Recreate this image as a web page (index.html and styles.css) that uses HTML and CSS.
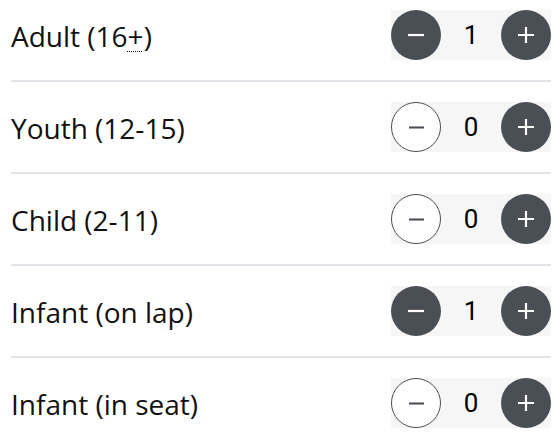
FILE: index.html
```html
<!DOCTYPE html>
<html>
<head>
<meta charset="utf-8">
<link rel="stylesheet" href="styles.css">
</head>
<body>
<ul class="pax-list">
  <li class="pax-row first">
    <span class="pax-label">Adult (16<abbr title="and over">+</abbr>)</span>
    <div class="counter">
      <button class="btn filled" aria-label="Decrease"><svg viewBox="0 0 50 50"><path d="M17 25h16"/></svg></button>
      <span class="count">1</span>
      <button class="btn filled" aria-label="Increase"><svg viewBox="0 0 50 50"><path d="M17 25h16M25 17v16"/></svg></button>
    </div>
  </li>
  <li class="pax-row">
    <span class="pax-label">Youth (12-15)</span>
    <div class="counter">
      <button class="btn outline" aria-label="Decrease"><svg viewBox="0 0 50 50"><path d="M17 25h16"/></svg></button>
      <span class="count">0</span>
      <button class="btn filled" aria-label="Increase"><svg viewBox="0 0 50 50"><path d="M17 25h16M25 17v16"/></svg></button>
    </div>
  </li>
  <li class="pax-row">
    <span class="pax-label">Child (2-11)</span>
    <div class="counter">
      <button class="btn outline" aria-label="Decrease"><svg viewBox="0 0 50 50"><path d="M17 25h16"/></svg></button>
      <span class="count">0</span>
      <button class="btn filled" aria-label="Increase"><svg viewBox="0 0 50 50"><path d="M17 25h16M25 17v16"/></svg></button>
    </div>
  </li>
  <li class="pax-row">
    <span class="pax-label">Infant (on lap)</span>
    <div class="counter">
      <button class="btn filled" aria-label="Decrease"><svg viewBox="0 0 50 50"><path d="M17 25h16"/></svg></button>
      <span class="count">1</span>
      <button class="btn filled" aria-label="Increase"><svg viewBox="0 0 50 50"><path d="M17 25h16M25 17v16"/></svg></button>
    </div>
  </li>
  <li class="pax-row last">
    <span class="pax-label">Infant (in seat)</span>
    <div class="counter">
      <button class="btn outline" aria-label="Decrease"><svg viewBox="0 0 50 50"><path d="M17 25h16"/></svg></button>
      <span class="count">0</span>
      <button class="btn filled" aria-label="Increase"><svg viewBox="0 0 50 50"><path d="M17 25h16M25 17v16"/></svg></button>
    </div>
  </li>
</ul>
</body>
</html>
```
FILE: styles.css
```css
html, body {
  margin: 0;
  padding: 0;
  background: #ffffff;
}
.pax-list {
  list-style: none;
  margin: 0 9px 0 11px;
  padding: 0;
  font-family: "Open Sans", "Liberation Sans", sans-serif;
}
.pax-row {
  display: flex;
  align-items: center;
  justify-content: space-between;
  padding: 20px 0;
  border-bottom: 2px solid #e1e5e9;
}
.pax-row.first {
  padding-top: 10px;
}
.pax-row.last {
  border-bottom: none;
}
.pax-label {
  font-size: 28px;
  color: #111111;
  line-height: 36px;
  position: relative;
  top: 1px;
}
.pax-label abbr {
  text-decoration: underline dotted;
  text-underline-offset: 4px;
  text-decoration-thickness: 1px;
}
.counter {
  display: flex;
  align-items: center;
  background: #f6f6f6;
  height: 50px;
}
.count {
  width: 60px;
  text-align: center;
  font-family: Roboto, "Liberation Sans", sans-serif;
  font-size: 26px;
  color: #000000;
}
.btn {
  width: 50px;
  height: 50px;
  border-radius: 50%;
  padding: 0;
  margin: 0;
  display: flex;
  align-items: center;
  justify-content: center;
  box-sizing: border-box;
}
.btn svg {
  width: 50px;
  height: 50px;
  display: block;
  fill: none;
  stroke-width: 2.2;
  stroke-linecap: butt;
}
.btn.filled {
  background: #4a4e55;
  border: none;
}
.btn.filled svg {
  stroke: #ffffff;
}
.btn.outline {
  background: #ffffff;
  border: 1.5px solid #4a4e55;
}
.btn.outline svg {
  width: 47px;
  height: 47px;
  stroke: #4a4e55;
}
```
